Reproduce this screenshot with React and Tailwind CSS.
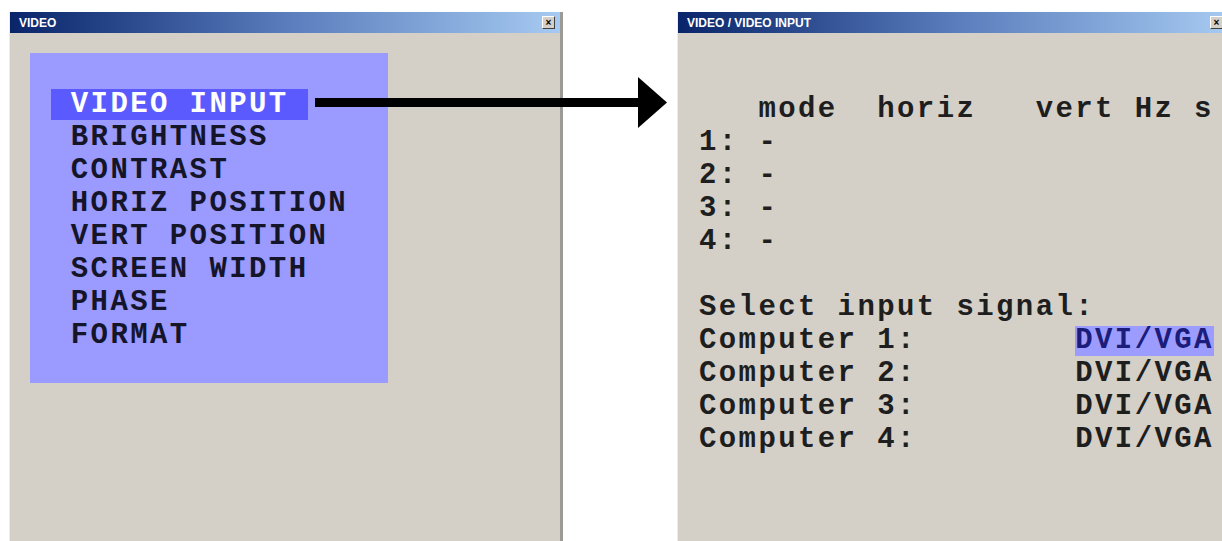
import React from "react";

const menuItems = [
  "BRIGHTNESS",
  "CONTRAST",
  "HORIZ POSITION",
  "VERT POSITION",
  "SCREEN WIDTH",
  "PHASE",
  "FORMAT",
];

const modeRows = ["1: -", "2: -", "3: -", "4: -"];

const computers = [1, 2, 3, 4];

const TitleBar = ({ title }) => (
  <div className="flex h-[21px] shrink-0 items-center justify-between bg-linear-to-r from-[#0a246a] via-[#5a7cbc] to-[#a6caf0] pl-[9px] pr-[5px]">
    <span className="font-['Liberation_Sans',Arial,sans-serif] text-[12px] font-bold leading-none tracking-normal text-white">
      {title}
    </span>
    <div className="flex h-[13px] w-[13px] shrink-0 items-center justify-center border border-t-white border-l-white border-r-[#404040] border-b-[#404040] bg-[#d4d0c8]">
      <span className="font-['Liberation_Sans',Arial,sans-serif] text-[10px] font-bold leading-none tracking-normal text-black">
        ×
      </span>
    </div>
  </div>
);

const Window = ({ title, children }) => (
  <div className="flex w-[554px] shrink-0 flex-col border-l border-r-[3px] border-l-[#eeece6] border-r-[#9c9a96] bg-[#d4d0c8]">
    <TitleBar title={title} />
    {children}
  </div>
);

const App = () => {
  return (
    <div className="relative flex h-[541px] w-[1222px] gap-[114px] overflow-hidden bg-white pl-[9px] pt-[12px] font-['Liberation_Mono','Courier_New',monospace] text-[29px] font-bold leading-[33px] tracking-[2.4px]">
      <Window title="VIDEO">
        <div className="pl-[20px] pt-[20px]">
          <div className="h-[330px] w-[358px] bg-[#9a9aff] pl-[21px] pt-[35px] text-[#15152a]">
            <div className="whitespace-pre">
              <span className="inline-block bg-[#5a5aff] leading-[31px] text-white">
                {" VIDEO INPUT "}
              </span>
            </div>
            {menuItems.map((item) => (
              <div key={item} className="whitespace-pre">
                {" " + item}
              </div>
            ))}
          </div>
        </div>
      </Window>

      <Window title="VIDEO / VIDEO INPUT">
        <div className="pl-[21px] pt-[60px] text-[#1e1e1e]">
          <div className="whitespace-pre">{"   mode  horiz   vert Hz s"}</div>
          {modeRows.map((row) => (
            <div key={row} className="whitespace-pre">
              {row}
            </div>
          ))}
          <div className="h-[33px]" />
          <div className="whitespace-pre">Select input signal:</div>
          {computers.map((n) => (
            <div key={n} className="whitespace-pre">
              {`Computer ${n}:        `}
              <span
                className={
                  n === 1
                    ? "inline-block bg-[#9c9cff] leading-[30px] text-[#1c1c7a]"
                    : "inline-block leading-[30px]"
                }
              >
                DVI/VGA
              </span>
            </div>
          ))}
        </div>
      </Window>

      {/* arrow from the menu entry to the sub window */}
      <svg
        className="absolute left-[310px] top-[70px]"
        width="362"
        height="64"
        viewBox="310 70 362 64"
      >
        <rect x="315" y="98" width="326" height="9" fill="#000" />
        <polygon points="638,77 667,102.5 638,128" fill="#000" />
      </svg>
    </div>
  );
};

export default App;
